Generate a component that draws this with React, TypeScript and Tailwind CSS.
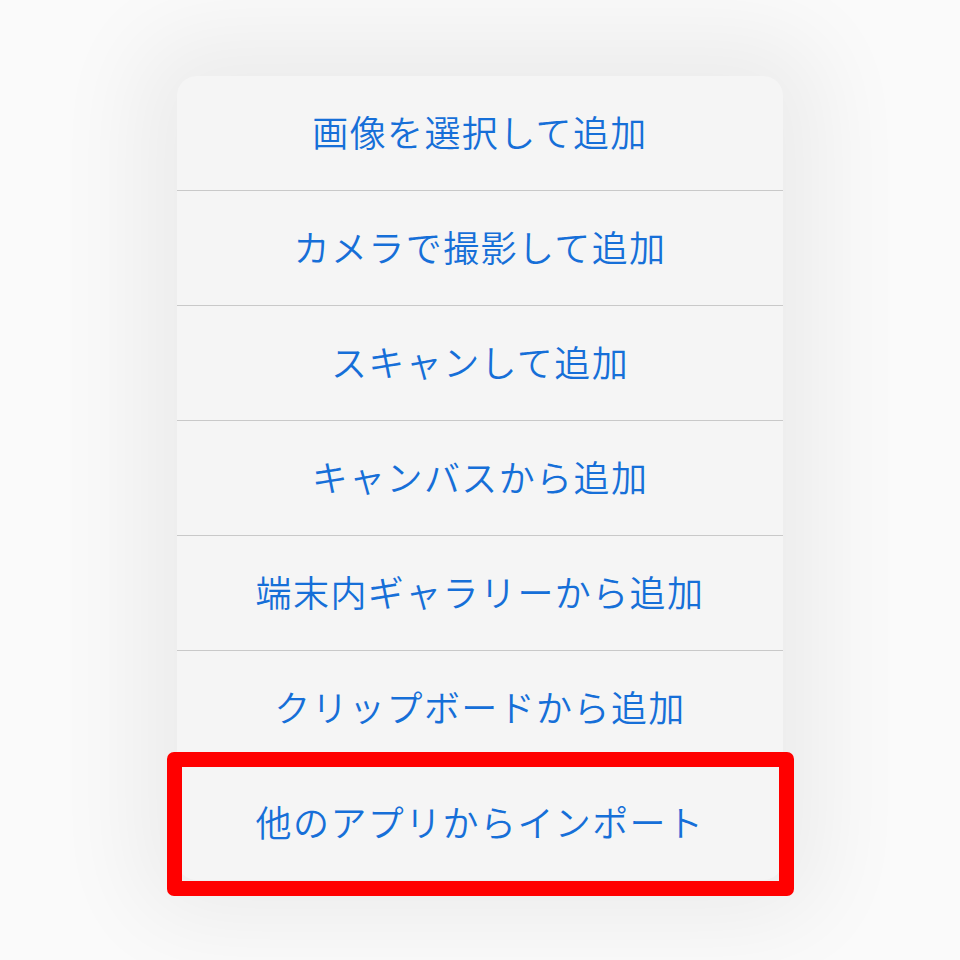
const items = [
  "画像を選択して追加",
  "カメラで撮影して追加",
  "スキャンして追加",
  "キャンバスから追加",
  "端末内ギャラリーから追加",
  "クリップボードから追加",
  "他のアプリからインポート",
];

export default function App() {
  return (
    <div
      className="w-[960px] h-[960px] bg-[#fafafa] flex justify-center pt-[76px] overflow-hidden"
      style={{ fontFamily: '"Noto Sans CJK JP", "Noto Sans", sans-serif' }}
    >
      <div className="relative w-[606px] h-[804px]">
        <div className="w-full h-full bg-[#f5f5f5] rounded-[20px] shadow-[0_0_90px_40px_rgba(0,0,0,0.06)] flex flex-col overflow-hidden">
          {items.map((label, i) => (
            <div
              key={label}
              className={
                i < items.length - 1
                  ? "h-[115px] shrink-0 border-b border-[#c9c9c9] flex items-center justify-center"
                  : "h-[114px] shrink-0 flex items-center justify-center"
              }
            >
              <span className="text-[36px] leading-none font-[350] text-[#166fd8] tracking-[1.4px] -translate-y-[2px]">
                {label}
              </span>
            </div>
          ))}
        </div>
        <div className="absolute left-[-10px] top-[676px] w-[627px] h-[144px] border-[15px] border-[#ff0000] rounded-[7px]" />
      </div>
    </div>
  );
}
